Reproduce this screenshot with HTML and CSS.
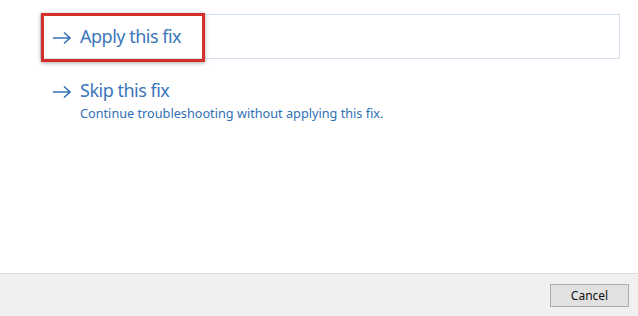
FILE: index.html
```html
<!DOCTYPE html>
<html lang="en">
<head>
<meta charset="UTF-8" />
<title>Troubleshooter</title>
<link rel="stylesheet" href="styles.css">
</head>
<body>

<div class="dialog">
  <main class="content">
    <a class="option option-hover" href="#">
      <svg class="arrow" width="20" height="14" viewBox="0 0 20 14">
        <path d="M1 7H18M12 1.5L18 7L12 12.5" fill="none" stroke="currentColor" stroke-width="1.6"/>
      </svg>
      <div class="option-text">
        <div class="option-title">Apply this fix</div>
      </div>
    </a>

    <a class="option" href="#">
      <svg class="arrow" width="20" height="14" viewBox="0 0 20 14">
        <path d="M1 7H18M12 1.5L18 7L12 12.5" fill="none" stroke="currentColor" stroke-width="1.6"/>
      </svg>
      <div class="option-text">
        <div class="option-title">Skip this fix</div>
        <div class="option-desc">Continue troubleshooting without applying this fix.</div>
      </div>
    </a>

    <!-- annotation box -->
    <span class="highlight"></span>
  </main>

  <footer class="footer">
    <button type="button" class="btn">Cancel</button>
  </footer>
</div>

</body>
</html>
```

FILE: styles.css
```css
/* Reset */
*, *::before, *::after {
  box-sizing: border-box;
}

body {
  margin: 0;
  background: #fff;
  font-family: 'Noto Sans', 'Open Sans', sans-serif;
}

.dialog {
  width: 638px;
  height: 316px;
  display: flex;
  flex-direction: column;
}

/* Options area */
.content {
  position: relative;
  flex: 1;
  padding: 14px 18px 0 40px;
}

.option {
  display: flex;
  align-items: flex-start;
  gap: 8px;
  padding: 9px 11px;
  border: 1px solid transparent;
  color: #3a76ba;
  text-decoration: none;
}

.option-hover {
  height: 45px;
  border-color: #d3e2ee;
}

.option + .option {
  margin-top: 9px;
}

.arrow {
  flex: none;
  margin-top: 7px;
  color: #3471b6;
}

.option-title {
  font-size: 18px;
  line-height: 25px;
  letter-spacing: -0.5px;
}

.option-desc {
  margin-top: 2px;
  font-size: 12.7px;
  line-height: 16px;
  color: #2f6fb5;
}

/* red annotation */
.highlight {
  position: absolute;
  left: 41px;
  top: 13px;
  width: 164px;
  height: 49px;
  border: 3px solid #d42f2b;
  box-shadow: 0 1px 4px rgba(0,0,0,0.35);
}

/* Footer */
.footer {
  height: 43px;
  flex: none;
  background: #f0f0f0;
  border-top: 1px solid #dcdcdc;
  display: flex;
  justify-content: flex-end;
  align-items: flex-start;
  padding: 10px 9px 0 0;
}

.btn {
  width: 79px;
  height: 23px;
  background: #e1e1e1;
  border: 1px solid #adadad;
  font-family: inherit;
  font-size: 12px;
  color: #111;
  padding: 0;
}
```
